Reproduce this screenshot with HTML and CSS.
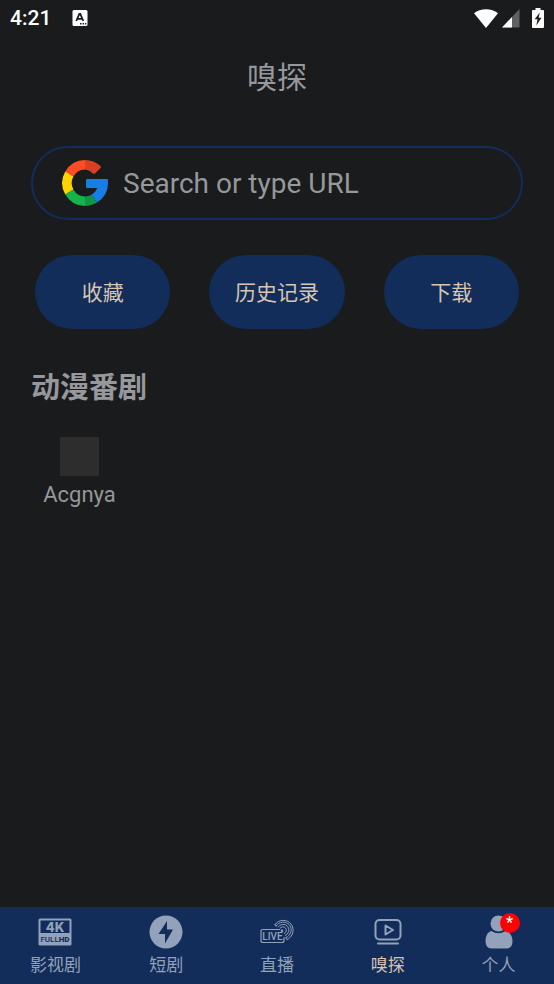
FILE: index.html
```html
<!DOCTYPE html>
<html lang="zh-CN">
<head>
<meta charset="utf-8">
<meta name="viewport" content="width=device-width, initial-scale=1">
<title>嗅探</title>
<link rel="stylesheet" href="styles.css">
</head>
<body>
<div class="status">
  <time class="clock">4:21</time>
  <svg class="keyboard" width="16" height="18" viewBox="0 0 16 18" aria-hidden="true">
    <rect x="0.5" y="1" width="15" height="16" rx="1.5" fill="#fff"/>
    <path d="M4.3 12 7.3 5h1l3 7M5.5 9.8h4.6" fill="none" stroke="#1a1c1e" stroke-width="1.8"/>
    <path d="M8 14.8h1.5m1 0H12m1 0h1.3" stroke="#1a1c1e" stroke-width="1.4"/>
  </svg>
  <div class="signals">
    <svg width="24" height="19" viewBox="0 0 24 19" aria-hidden="true"><path d="M0 4.2C6.5-1 17.500-1 24 4.2L12 19Z" fill="#fff"/></svg>
    <svg width="18" height="19" viewBox="0 0 18 19" aria-hidden="true"><path d="M17.500 0v18.500H0Z" fill="#5e6062"/><path d="M10 8v10.500H0Z" fill="#fff"/></svg>
    <svg class="battery" width="12" height="20" viewBox="0 0 12 20" aria-hidden="true"><path d="M3.500 0h5v2H11q1 0 1 1v16q0 1-1 1H1q-1 0-1-1V3q0-1 1-1h2.500Z" fill="#fff"/><path d="M7.800 4.500 2.700 11.300H5.500L4.300 17.500 9.500 9.800H6.600Z" fill="#1a1c1e"/></svg>
  </div>
</div>
<header class="header"><h1>嗅探</h1></header>
<main class="main">
  <form class="search">
    <svg class="google" width="48" height="48" viewBox="0 0 48 48" aria-hidden="true">
      <path d="M4.300 12.500A23 23 0 0 1 24 1v9.500a13.500 13.500 0 0 0-11.600 7Z" fill="#ff4b26"/>
      <path d="M24 1a23 23 0 0 1 15.500 6q1 1 0 2L34 14.500q-1 .8-2 0a13.500 13.500 0 0 0-8-4Z" fill="#d93f21"/>
      <path d="M4.300 12.500a23 23 0 0 0 0 23l8.100-5a13.500 13.500 0 0 1 0-13Z" fill="#ffd500"/>
      <path d="M4.300 35.500A23 23 0 0 0 24 47v-9.500a13.500 13.500 0 0 1-11.600-7Z" fill="#16b34a"/>
      <path d="M24 47a23 23 0 0 0 12-3.500l-5.500-7.800a13.500 13.500 0 0 1-6.500 1.800Z" fill="#109641"/>
      <path d="M26 20h20q1 0 1 1v3a23 23 0 0 1-11 19.500l-5.500-7.800q4.300-2.500 5.900-6.700H26q-1 0-1-1v-7q0-1 1-1Z" fill="#167ee6"/>
    </svg>
    <input type="text" aria-label="Search or type URL" placeholder="Search or type URL">
  </form>
  <div class="actions">
    <button type="button">收藏</button>
    <button type="button">历史记录</button>
    <button type="button">下载</button>
  </div>
  <section class="sites">
    <h2>动漫番剧</h2>
    <a class="site" href="#"><span class="thumb"></span><span>Acgnya</span></a>
  </section>
</main>
<nav class="nav">
  <a href="#">
    <svg width="34" height="34" viewBox="0 0 34 34" aria-hidden="true">
      <rect x="0.500" y="3.500" width="33" height="27" rx="1.500" fill="#93a1ba"/>
      <rect x="2.500" y="5.500" width="29" height="12.500" fill="#122d59"/>
      <text x="17" y="16.500" text-anchor="middle" class="four-k">4K</text>
      <text x="17" y="27" text-anchor="middle" class="full-hd">FULL<tspan class="hd">HD</tspan></text>
    </svg>
    <span>影视剧</span>
  </a>
  <a href="#">
    <svg width="34" height="34" viewBox="0 0 34 34" aria-hidden="true"><circle cx="17" cy="17" r="16.500" fill="#93a1ba"/><path d="M18 6 9.500 19H16v9.500L24 14.500H18Z" fill="#122d59"/></svg>
    <span>短剧</span>
  </a>
  <a href="#">
    <svg width="34" height="34" viewBox="0 0 34 34" aria-hidden="true">
      <g fill="none" stroke="#93a1ba" stroke-linecap="round">
        <path d="M19.500 14.500H3q-2 0-2 2v9q0 2 2 2h19q2 0 2-2v-3" stroke-width="1.200"/>
        <path d="M15 9.500A10 10 0 1 1 27 24.500M15 9.500q-.5 1.500 1.300 1.500M27 24.500q-1.300-.4-1-2M16.300 11A8 8 0 1 1 26 22.500M18.300 12A5.800 5.800 0 1 1 25.300 20.500M20 13.300a3.500 3.500 0 1 1 4.300 5.200"/>
      </g>
      <circle cx="22" cy="15.800" r="1.300" fill="#93a1ba"/>
      <text x="12.500" y="25" text-anchor="middle" class="live">LIVE</text>
    </svg>
    <span>直播</span>
  </a>
  <a href="#" class="active" aria-current="page">
    <svg width="34" height="34" viewBox="0 0 34 34" aria-hidden="true">
      <g fill="none" stroke="#93a1ba" stroke-width="2" stroke-linejoin="round" stroke-linecap="round"><rect x="4.500" y="5" width="25" height="19.500" rx="4"/><path d="M14.500 10.500v9l7.500-4.500Z"/><path d="M7 28.500h20"/></g>
    </svg>
    <span>嗅探</span>
  </a>
  <a href="#">
    <span class="icon-wrap">
      <svg width="34" height="34" viewBox="0 0 34 34" aria-hidden="true"><circle cx="16.500" cy="8.500" r="8" fill="#93a1ba"/><path d="M9.500 16q7 4.500 14 0c4.500 1 7 5 7 10 0 4.500-2 7.500-6 7.500h-15c-4 0-6-3-6-7.500 0-5 2-9 6-10Z" fill="#93a1ba"/></svg>
      <span class="badge">*</span>
    </span>
    <span>个人</span>
  </a>
</nav>
</body>
</html>
```
FILE: styles.css
```css
* {
  box-sizing: border-box;
}

body {
  margin: 0;
  min-height: 100vh;
  display: flex;
  flex-direction: column;
  background: #191b1d;
  color: #96989b;
  font-family: Roboto, "Noto Sans CJK SC", sans-serif;
}

h1,
h2 {
  margin: 0;
}

a {
  color: inherit;
  text-decoration: none;
}

svg {
  display: block;
}

.status {
  display: flex;
  align-items: center;
  height: 36px;
  padding: 0 10px;
  color: #fff;
}

.clock {
  font-size: 21px;
  font-weight: 500;
}

.keyboard {
  margin-left: 21px;
}

.signals {
  display: flex;
  align-items: center;
  gap: 4px;
  margin-left: auto;
}

.battery {
  margin-left: 8px;
}

.header {
  display: flex;
  align-items: center;
  justify-content: center;
  height: 78px;
}

h1 {
  font-size: 30px;
  font-weight: 400;
}

.main {
  flex: 1;
  padding: 32px 31px;
}

.search {
  display: flex;
  align-items: center;
  gap: 14px;
  height: 74px;
  padding: 0 28px;
  border: 2px solid #122d59;
  border-radius: 37px;
}

.search input {
  flex: 1;
  min-width: 0;
  padding: 0;
  border: 0;
  outline: 0;
  background: none;
  color: inherit;
  font: 28px Roboto, sans-serif;
}

.search input::placeholder {
  color: #96989b;
  opacity: 1;
}

.actions {
  display: grid;
  grid-template-columns: repeat(3, 1fr);
  gap: 39px;
  padding: 35px 4px;
}

.actions button {
  height: 74px;
  padding: 0 0 3px;
  border: 0;
  border-radius: 37px;
  background: #122d59;
  color: #d7c4b1;
  font: 21px Roboto, "Noto Sans CJK SC", sans-serif;
}

h2 {
  font-size: 29px;
  line-height: 48px;
}

.site {
  display: inline-flex;
  flex-direction: column;
  align-items: center;
  gap: 5px;
  width: 97px;
  margin-top: 25px;
  font-size: 22px;
  line-height: 28px;
}

.thumb {
  width: 39px;
  height: 39px;
  background: #2d2d2d;
}

.nav {
  display: grid;
  grid-template-columns: repeat(5, 1fr);
  height: 77px;
  background: #122d59;
  color: #93a1ba;
  font-size: 17px;
  line-height: 24px;
}

.nav a {
  display: flex;
  flex-direction: column;
  align-items: center;
  gap: 4px;
  padding-top: 8px;
}

.nav .active {
  color: #d7c4b1;
}

.four-k {
  fill: #93a1ba;
  font: 800 13px Inter, sans-serif;
}

.full-hd {
  fill: #122d59;
  font: 500 8px Roboto, sans-serif;
}

.hd {
  font-weight: 900;
}

.live {
  fill: #93a1ba;
  font: 500 10px Roboto, sans-serif;
}

.icon-wrap {
  position: relative;
}

.badge {
  position: absolute;
  top: -2px;
  right: -4px;
  width: 20px;
  height: 20px;
  border-radius: 50%;
  background: #f00;
  color: #fff;
  font-size: 16px;
  font-weight: 500;
  line-height: 20px;
  text-align: center;
}
```
